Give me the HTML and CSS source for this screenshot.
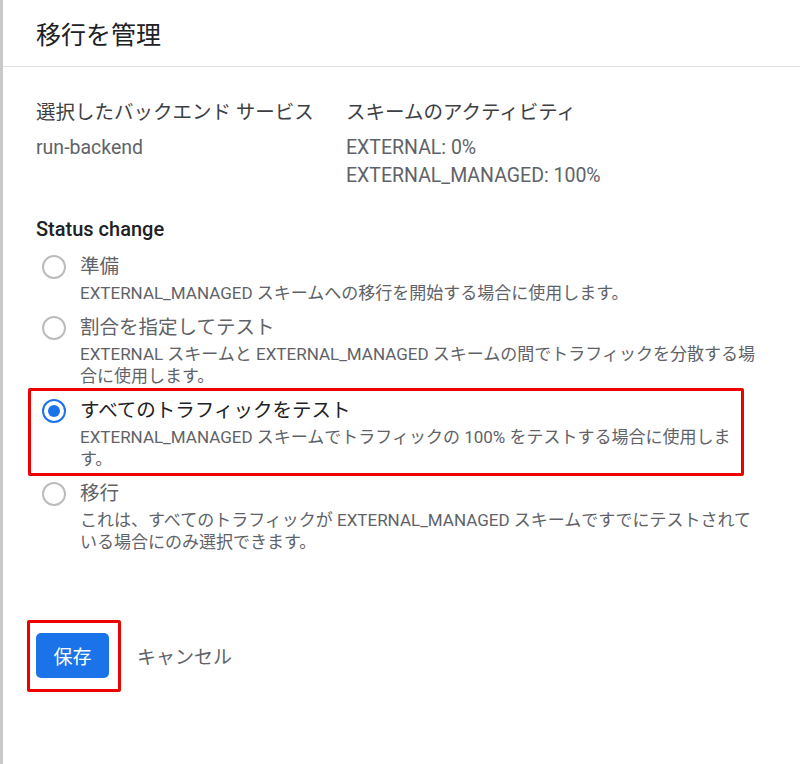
FILE: index.html
```html
<!DOCTYPE html>
<html lang="ja">
<head>
<meta charset="UTF-8">
<title>移行を管理</title>
<link rel="stylesheet" href="styles.css">
</head>
<body>

<div class="dialog">
  <div class="dialog-header">
    <h1>移行を管理</h1>
  </div>

  <div class="dialog-body">
    <div class="info">
      <div class="info-col first">
        <div class="info-label">選択したバックエンド サービス</div>
        <div class="info-value">run-backend</div>
      </div>
      <div class="info-col">
        <div class="info-label">スキームのアクティビティ</div>
        <div class="info-value">EXTERNAL: 0%</div>
        <div class="info-value">EXTERNAL_MANAGED: 100%</div>
      </div>
    </div>

    <div class="status-title">Status change</div>

    <div class="options">
      <div class="option">
        <span class="radio"></span>
        <div class="option-text">
          <div class="option-label">準備</div>
          <div class="option-desc">EXTERNAL_MANAGED スキームへの移行を開始する場合に使用します。</div>
        </div>
      </div>
      <div class="option">
        <span class="radio"></span>
        <div class="option-text">
          <div class="option-label">割合を指定してテスト</div>
          <div class="option-desc">EXTERNAL スキームと EXTERNAL_MANAGED スキームの間でトラフィックを分散する場合に使用します。</div>
        </div>
      </div>
      <div class="option selected marked">
        <span class="radio"></span>
        <div class="option-text">
          <div class="option-label">すべてのトラフィックをテスト</div>
          <div class="option-desc">EXTERNAL_MANAGED スキームでトラフィックの 100% をテストする場合に使用します。</div>
        </div>
      </div>
      <div class="option">
        <span class="radio"></span>
        <div class="option-text">
          <div class="option-label">移行</div>
          <div class="option-desc">これは、すべてのトラフィックが EXTERNAL_MANAGED スキームですでにテストされている場合にのみ選択できます。</div>
        </div>
      </div>
    </div>

    <div class="actions">
      <button class="btn-save marked">保存</button>
      <button class="btn-cancel">キャンセル</button>
    </div>
  </div>
</div>

</body>
</html>
```

FILE: styles.css
```css
body {
  margin: 0;
  background-color: #ffffff;
  font-family: Roboto, "Noto Sans CJK JP", sans-serif;
  color: #202124;
}

.dialog {
  min-height: 764px;
  border-left: 3px solid #c9c9c9;
  box-sizing: border-box;
}

.dialog-header {
  height: 66px;
  display: flex;
  align-items: center;
  padding-left: 33px;
  border-bottom: 1px solid #e0e0e0;
}

h1 {
  margin: 0;
  font-size: 25px;
  font-weight: 400;
  color: #202124;
}

.dialog-body {
  padding: 32px 36px 0 33px;
}

.info {
  display: flex;
}

.info-col.first {
  width: 310px;
}

.info-label {
  font-size: 19.5px;
  line-height: 28px;
  color: #3c4043;
  margin-bottom: 7px;
}

.info-value {
  font-size: 19.5px;
  line-height: 28px;
  color: #5f6368;
}

.status-title {
  margin-top: 25px;
  font-size: 20px;
  line-height: 28px;
  font-weight: 500;
  color: #202124;
}

.options {
  display: flex;
  flex-direction: column;
  gap: 11px;
  margin-top: 11px;
  margin-right: 6px;
}

.option {
  display: flex;
  align-items: flex-start;
  gap: 14px;
  position: relative;
}

.radio {
  flex: none;
  width: 24px;
  height: 24px;
  margin: 1px 0 0 6px;
  border: 2px solid #bcbcbc;
  border-radius: 50%;
  box-sizing: border-box;
  display: flex;
  align-items: center;
  justify-content: center;
}

.option.selected .radio {
  border: 2.5px solid #1a73e8;
}

.option.selected .radio::before {
  content: "";
  width: 12px;
  height: 12px;
  border-radius: 50%;
  background: #1a73e8;
}

.option-text {
  flex: 1;
}

.option-label {
  font-size: 19.5px;
  line-height: 26px;
  color: #5f6368;
}

.option.selected .option-label {
  color: #202124;
}

.option-desc {
  margin-top: 2px;
  font-size: 17px;
  line-height: 22px;
  color: #5f6368;
}

.actions {
  display: flex;
  align-items: center;
  gap: 12px;
  margin-top: 80px;
}

.btn-save {
  position: relative;
  width: 73px;
  height: 45px;
  border: none;
  border-radius: 5px;
  background: #1a73e8;
  color: #ffffff;
  font-family: inherit;
  font-size: 19px;
  cursor: pointer;
}

.btn-cancel {
  height: 45px;
  padding: 0 16px;
  border: none;
  background: none;
  color: #5f6368;
  font-family: inherit;
  font-size: 19px;
  cursor: pointer;
}

/* red annotation boxes */
.marked::after {
  content: "";
  position: absolute;
  border: 3px solid #ee0000;
  border-radius: 2px;
  pointer-events: none;
}

.option.marked::after {
  top: -10px;
  bottom: -6px;
  left: -8px;
  right: 14px;
}

.btn-save.marked::after {
  top: -13px;
  bottom: -14px;
  left: -9px;
  right: -12px;
}
```
